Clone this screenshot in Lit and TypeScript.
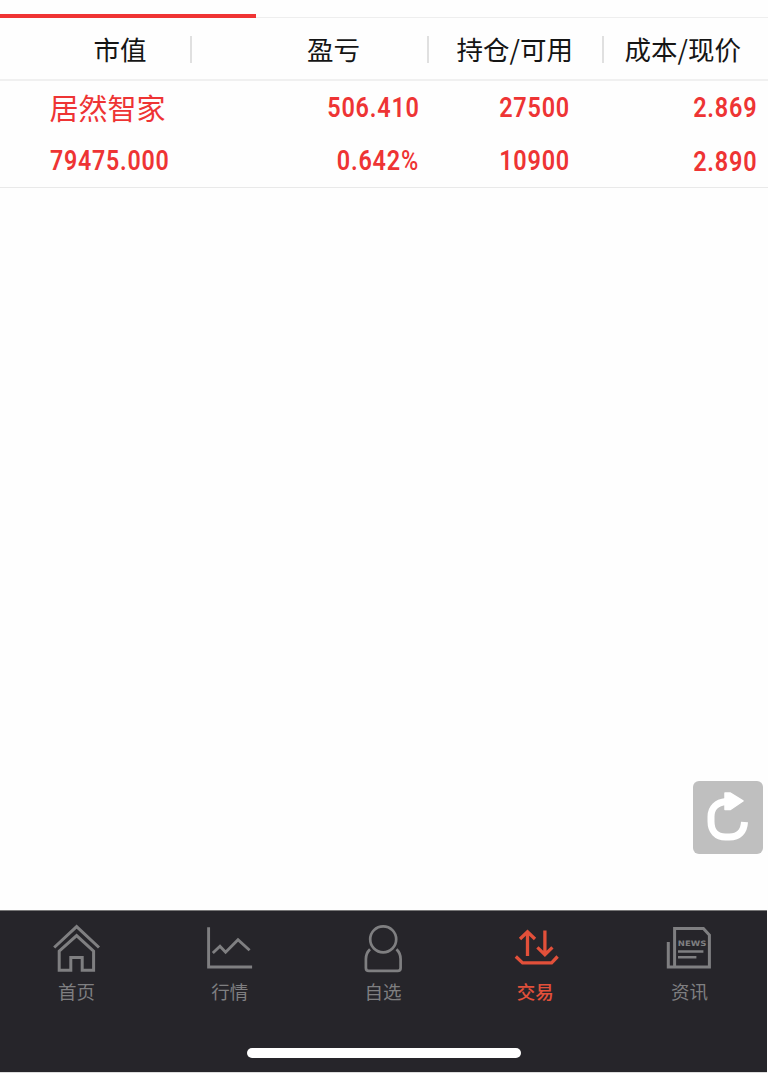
import { LitElement, html, svg, css } from "lit";
import { customElement, property } from "lit/decorators.js";
import { classMap } from "lit/directives/class-map.js";

const icons = {
  home: svg`<g fill="none" stroke="currentColor" stroke-width="3">
    <path d="M3.2 25.5 25.600 4.6l22.4 20.9"/>
    <path d="M8.200 48.200V29.2L25.600 13.6l17 15.6v19H31.2V35.500H19.800v12.700Z"/></g>`,
  market: svg`<g fill="none" stroke="currentColor" stroke-width="2.9">
    <path d="M4.6 5.2v39.8h43.5"/>
    <path d="M8.800 31l7.2-6.8 5.6 6L34 17.700l11.6 10.600"/></g>`,
  watch: svg`<g fill="none" stroke="currentColor" stroke-width="2.7">
    <circle cx="25.2" cy="17.3" r="13"/>
    <path d="M12 27.2C9.100 30 7.900 33.200 7.900 36.900v9q0 3 3 3h28.7q3 0 3-3v-9c0-3.700-1.2-6.900-4.1-9.700"/></g>`,
  trade: svg`<g fill="none" stroke="currentColor" stroke-width="3.3">
    <path d="M16.500 34V9.500M9 17l7.500-7.200 7.500 7.200"/>
    <path d="M33.900 8.500v24.200M26.400 25.400l7.500 7.200 7.500-7.200"/>
    <path d="M4.800 34.500l6.800 6.400h29l6-6.400"/></g>`,
  news: svg`<g fill="none" stroke="currentColor" stroke-width="3">
    <path d="M4.300 20v25.500M10.600 45.500V6.500h28.800l6 6.600v31.900H2.800"/>
    <path d="M14 29.500h25.400M14 35.300h18.400" stroke-width="2.6"/></g>
    <text class="news" x="13.800" y="24" textLength="28.6" lengthAdjust="spacingAndGlyphs">NEWS</text>`,
};

@customElement("tab-item")
class TabItem extends LitElement {
  @property() icon: keyof typeof icons = "home";
  @property() label = "";
  @property({ type: Boolean }) active = false;

  static styles = css`
    :host { flex: 1; display: block; }
    .tab { display: flex; flex-direction: column; align-items: center; color: #7f7f81; padding-top: 11px; }
    .active { color: #e2503a; }
    svg { width: 52px; height: 52px; display: block; }
    .label { font-size: 18.5px; line-height: 26px; margin-top: 3.5px; margin-right: 1px; }
    .active .label { font-weight: 500; margin-right: 3px; }
    .news { font: 700 7.4px "DejaVu Sans", sans-serif; fill: currentColor; }
  `;

  render() {
    return html`<div class=${classMap({ tab: true, active: this.active })}>
      <svg viewBox="0 0 52 52">${icons[this.icon]}</svg>
      <span class="label">${this.label}</span>
    </div>`;
  }
}

@customElement("app-root")
class AppRoot extends LitElement {
  static styles = css`
    * { box-sizing: border-box; }
    :host {
      display: flex; flex-direction: column; position: relative; height: 1073px;
      background: #fefefe; color: #151515; overflow: hidden;
      font-family: "Noto Sans CJK SC", sans-serif;
    }
    .tabs { height: 18px; padding-top: 14px; border-bottom: 1px solid #eee; flex: none; }
    .ink { width: 256px; height: 4px; background: #f03434; }
    .row { display: grid; grid-template-columns: 192px 237px 175px 164px; flex: none; }
    .head { height: 63px; border-bottom: 2px solid #f0f0f0; padding-top: 18px; font-size: 26.5px; line-height: 26px; }
    .head span { height: 27px; border-right: 2px solid #e0e0e0; white-space: nowrap; }
    .head span:last-child { border: 0; }
    .c1 { padding-left: 93.5px; }
    .c2 { padding-left: 115px; }
    .c3 { padding-left: 27.5px; }
    .c4 { padding-left: 20.5px; }
    .position {
      display: flex; justify-content: space-between; height: 107px; flex: none;
      border-bottom: 1px solid #e9e9e9; color: #ee3434; padding: 0 11.5px 0 50px;
    }
    .cell { display: flex; flex-direction: column; padding-top: 1px; line-height: 52.5px; align-items: flex-end; }
    .first { width: 142px; align-items: flex-start; }
    .profit { width: 226.5px; }
    .amount { width: 151px; }
    .price { width: 187px; line-height: 54px; padding-top: 0; }
    .name { font-size: 29px; line-height: 51px; height: 52.5px; margin-left: -0.5px; }
    .num {
      font: 600 26.8px Roboto, sans-serif; line-height: inherit;
      letter-spacing: 0.9px; margin-right: -0.9px;
      transform: scaleX(.875); transform-origin: 100% 50%;
    }
    .num i { font-style: normal; font-weight: 500; }
    .first .num { transform: scaleX(.865); transform-origin: 0 50%; }
    .space { flex: 1; }
    .refresh {
      position: absolute; right: 5px; top: 781px; width: 70px; height: 73px;
      border: 0; border-radius: 6px; background: #bfbfbf; padding: 0;
    }
    .refresh svg { width: 70px; height: 73px; display: block; }
    .bar {
      height: 163px; width: 767px; background: #26252a; border-top: 1px solid #777;
      border-bottom: 1px solid #ddd; display: flex; flex-direction: column; align-items: center; flex: none;
    }
    nav { display: flex; width: 766px; height: 136.5px; }
    .grip { width: 274px; height: 10px; border-radius: 5px; background: #fff; }
  `;

  render() {
    return html`
      <div class="tabs"><div class="ink"></div></div>
      <div class="row head">
        <span class="c1">市值</span><span class="c2">盈亏</span><span class="c3">持仓/可用</span><span class="c4">成本/现价</span>
      </div>
      <div class="position">
        <div class="cell first"><span class="name">居然智家</span><span class="num">79475.000</span></div>
        <div class="cell profit"><span class="num">506.410</span><span class="num">0.642<i>%</i></span></div>
        <div class="cell amount"><span class="num">27500</span><span class="num">10900</span></div>
        <div class="cell price"><span class="num">2.869</span><span class="num">2.890</span></div>
      </div>
      <div class="space"></div>
      <button class="refresh" aria-label="刷新">
        <svg viewBox="0 0 70 73">
          <path d="M33 20.500C23.500 21.500 18 27 18 35.500v5C18 50 23.500 56 32.500 56h4C46 56 51 50.500 51.500 41" fill="none" stroke="#fff" stroke-width="7"/>
          <path d="M32 12h5L50 20 37.500 28.500H32Z" fill="#fff" stroke="#fff" stroke-width="1.500" stroke-linejoin="round"/>
        </svg>
      </button>
      <div class="bar">
        <nav>
          <tab-item icon="home" label="首页"></tab-item>
          <tab-item icon="market" label="行情"></tab-item>
          <tab-item icon="watch" label="自选"></tab-item>
          <tab-item icon="trade" label="交易" active></tab-item>
          <tab-item icon="news" label="资讯"></tab-item>
        </nav>
        <div class="grip"></div>
      </div>
    `;
  }
}
